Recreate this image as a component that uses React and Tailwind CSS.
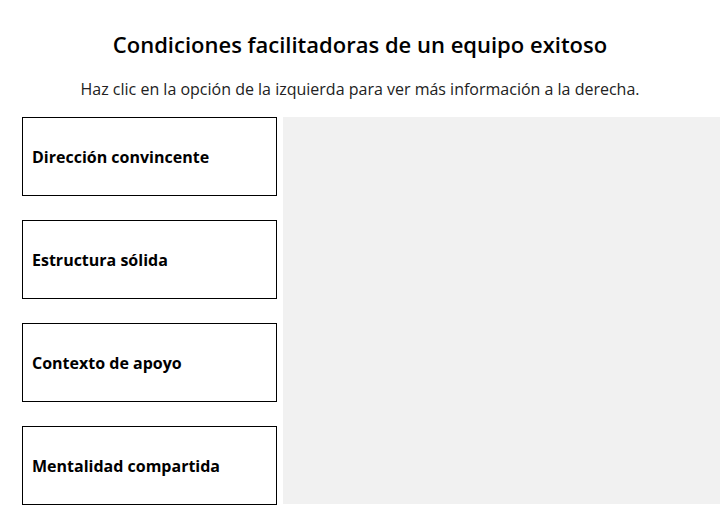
const items = [
    "Dirección convincente",
    "Estructura sólida",
    "Contexto de apoyo",
    "Mentalidad compartida",
];

export default function App() {
    return (
        <div
            className="w-[720px] h-[525px] bg-white text-black"
            style={{ fontFamily: '"Open Sans", sans-serif' }}
        >
            <h1 className="pt-[29px] text-center text-[22px] font-semibold leading-[30px]">
                Condiciones facilitadoras de un equipo exitoso
            </h1>
            <p className="mt-[20px] text-center text-[16px] leading-[20px] text-[#222]">
                Haz clic en la opción de la izquierda para ver más información a la derecha.
            </p>

            <div className="mt-[18px] flex pl-[22px]">
                <div className="flex w-[255px] flex-col gap-[24px]">
                    {items.map((item) => (
                        <button
                            key={item}
                            type="button"
                            className="flex h-[79px] items-center border border-black bg-white px-[9px] text-left text-[16px] font-bold"
                        >
                            {item}
                        </button>
                    ))}
                </div>
                <div className="ml-[6px] h-[387px] flex-1 bg-[#f1f1f1]" />
            </div>
        </div>
    );
}
